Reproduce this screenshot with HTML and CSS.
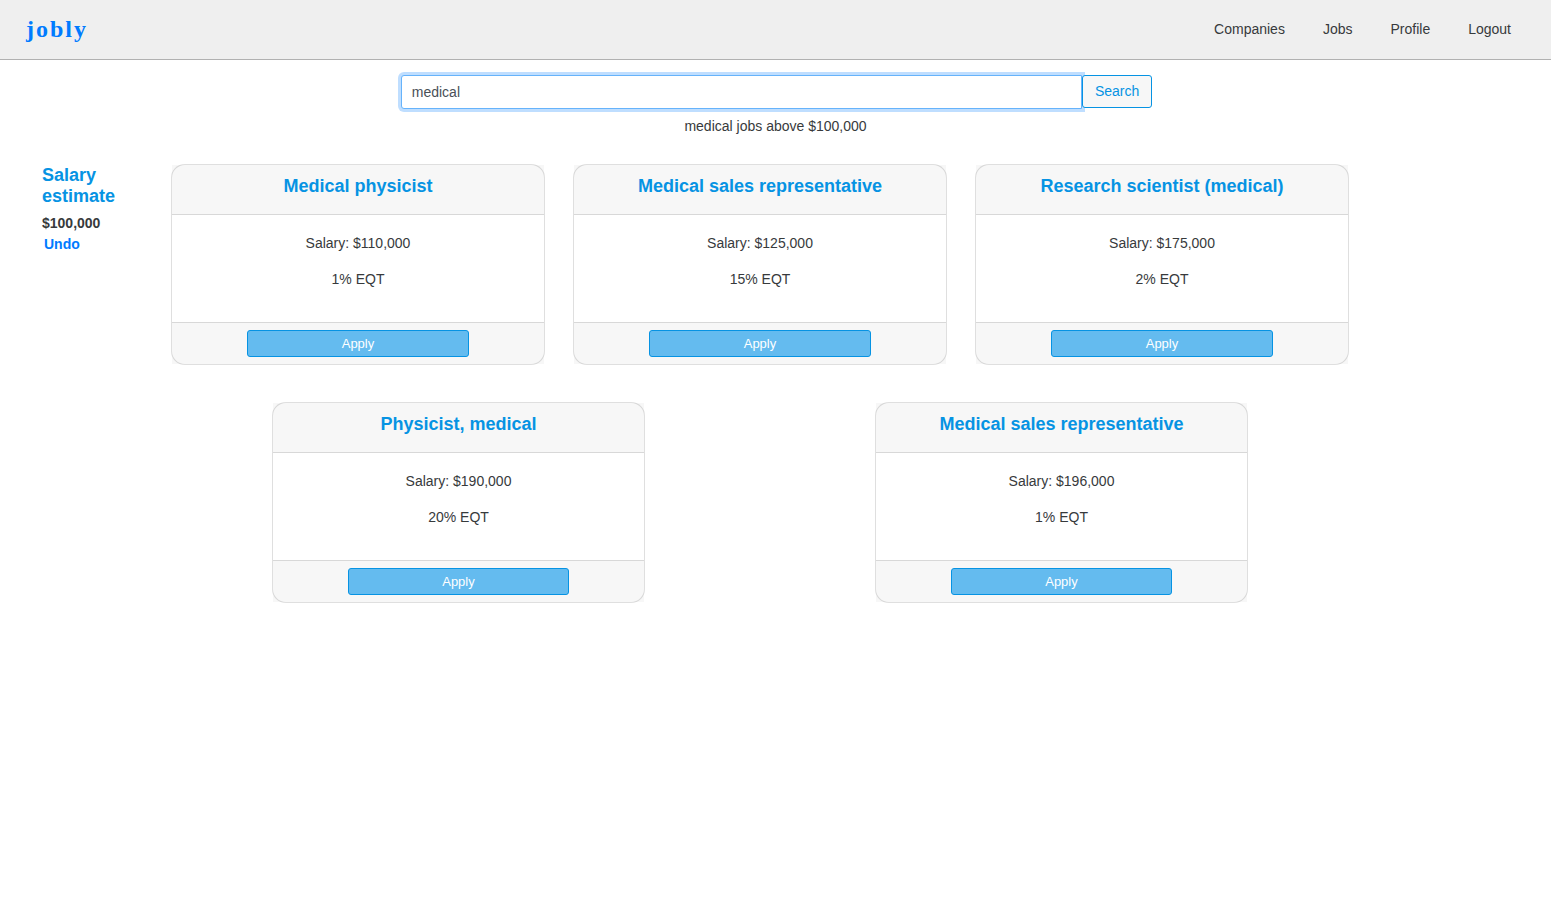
FILE: index.html
```
<!DOCTYPE html>
<html lang="en">
<head>
<meta charset="utf-8">
<title>Jobly</title>
<link rel="stylesheet" href="styles.css">
</head>
<body>
<header class="navbar">
  <a class="brand" href="#">jobly</a>
  <nav class="nav-links">
    <a href="#">Companies</a>
    <a href="#">Jobs</a>
    <a href="#">Profile</a>
    <a href="#">Logout</a>
  </nav>
</header>
<form class="search">
  <input class="search-input" type="text" value="medical" aria-label="Search jobs">
  <button class="search-button" type="button">Search</button>
</form>
<p class="summary">medical jobs above $100,000</p>
<div class="content">
  <aside class="filters">
    <h2 class="filters-title">Salary estimate</h2>
    <div class="filters-value">$100,000</div>
    <button class="undo" type="button">Undo</button>
  </aside>
  <main class="jobs">
    <article class="card">
      <h3 class="card-header">Medical physicist</h3>
      <div class="card-body"><p>Salary: $110,000</p><p>1% EQT</p></div>
      <div class="card-footer"><button class="apply" type="button">Apply</button></div>
    </article>
    <article class="card">
      <h3 class="card-header">Medical sales representative</h3>
      <div class="card-body"><p>Salary: $125,000</p><p>15% EQT</p></div>
      <div class="card-footer"><button class="apply" type="button">Apply</button></div>
    </article>
    <article class="card">
      <h3 class="card-header">Research scientist (medical)</h3>
      <div class="card-body"><p>Salary: $175,000</p><p>2% EQT</p></div>
      <div class="card-footer"><button class="apply" type="button">Apply</button></div>
    </article>
    <article class="card">
      <h3 class="card-header">Physicist, medical</h3>
      <div class="card-body"><p>Salary: $190,000</p><p>20% EQT</p></div>
      <div class="card-footer"><button class="apply" type="button">Apply</button></div>
    </article>
    <article class="card">
      <h3 class="card-header">Medical sales representative</h3>
      <div class="card-body"><p>Salary: $196,000</p><p>1% EQT</p></div>
      <div class="card-footer"><button class="apply" type="button">Apply</button></div>
    </article>
  </main>
</div>
</body>
</html>
```
FILE: styles.css
```
* {
  box-sizing: border-box;
}

body {
  margin: 0;
  background: #fff;
  color: #373a3c;
  font-family: "Liberation Sans", Arial, sans-serif;
  font-size: 14px;
  line-height: 21px;
}

h2, h3, p {
  margin: 0;
}

button, input {
  font-family: inherit;
}

.navbar {
  display: flex;
  justify-content: space-between;
  align-items: center;
  height: 60px;
  padding: 0 40px 0 26px;
  background: #efefef;
  border-bottom: 1px solid #b1b1b1;
}

.brand {
  color: #007bff;
  font-family: "Liberation Serif", "Times New Roman", serif;
  font-size: 24px;
  font-weight: bold;
  letter-spacing: 2px;
  text-decoration: none;
}

.nav-links {
  display: flex;
  gap: 38px;
}

.nav-links a {
  color: #373a3c;
  text-decoration: none;
}

.search {
  display: flex;
  width: 50%;
  margin: 15px auto 0;
  padding: 0 11px 0 13px;
}

.search-input {
  flex: 1;
  min-width: 0;
  height: 34px;
  padding: 0 10px;
  background: #fff;
  border: 1px solid #66b3fb;
  border-radius: 3px 0 0 3px;
  box-shadow: 0 0 0 3px #bfdeff;
  color: #495057;
  font-size: 14px;
  outline: none;
}

.search-button {
  height: 33px;
  padding: 0 12px 2px;
  background: #f7f7f7;
  border: 1px solid #0693e3;
  border-radius: 3px;
  color: #0693e3;
  font-size: 14px;
  position: relative;
}

.summary {
  margin-top: 7px;
  text-align: center;
}

.content {
  display: flex;
  margin-top: 27px;
  padding-right: 188px;
}

.filters {
  flex: none;
  width: 157px;
  padding: 1px 30px 0 42px;
  font-weight: bold;
}

.filters-title {
  color: #0693e3;
  font-size: 18px;
  line-height: 21px;
}

.filters-value {
  margin-top: 6px;
}

.undo {
  display: block;
  padding: 0 2px;
  background: none;
  border: 0;
  color: #007bff;
  font-size: 14px;
  font-weight: bold;
  line-height: 21px;
}

.jobs {
  flex: 1;
  display: flex;
  flex-wrap: wrap;
  justify-content: space-around;
  row-gap: 37px;
}

.card {
  width: 31%;
  background: #fff;
  border: 1px solid rgba(0, 0, 0, .125);
  border-radius: 14px;
  text-align: center;
}

.card-header {
  padding: 11px 18px 17px;
  background: rgba(0, 0, 0, .03);
  border-bottom: 1px solid rgba(0, 0, 0, .125);
  color: #0693e3;
  font-size: 18px;
  line-height: 21px;
}

.card-body {
  display: grid;
  gap: 15px;
  padding: 18px 18px 32px;
}

.card-footer {
  padding: 7px;
  background: rgba(0, 0, 0, .03);
  border-top: 1px solid rgba(0, 0, 0, .125);
}

.apply {
  display: block;
  width: 62%;
  height: 27px;
  margin: 0 auto;
  padding: 0;
  background: #64bbef;
  border: 1px solid #0693e3;
  border-radius: 3px;
  color: #fff;
  font-size: 13px;
}
```
